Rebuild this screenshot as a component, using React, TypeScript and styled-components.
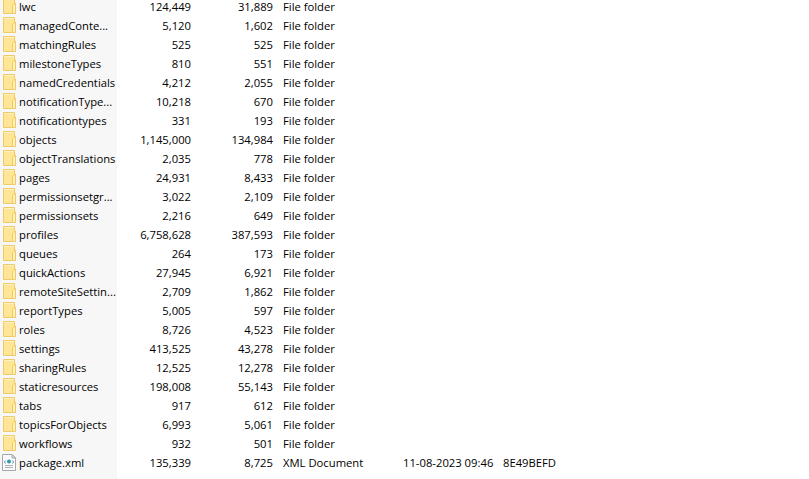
import React from 'react';
import styled, { createGlobalStyle } from 'styled-components';

const GlobalStyle = createGlobalStyle`
  html, body {
    margin: 0;
    height: 100%;
    overflow: hidden;
    background: #fff;
  }
`;

const Page = styled.div`
  height: 479px;
  overflow: hidden;
  background: linear-gradient(to right, #f7f7f7 117px, #fff 117px);
  color: #000;
  font-family: 'Open Sans', 'Noto Sans', sans-serif;
  font-size: 11.25px;
`;

const List = styled.div`
  margin-top: -3px;
`;

const Row = styled.div`
  display: grid;
  grid-template-columns: 19px 98px 74px 82px 10px 120px 100px 1fr;
  align-items: center;
  height: 19px;
  white-space: nowrap;
`;

const IconCell = styled.div`
  display: flex;
  align-items: flex-start;
  height: 19px;
  padding: 1px 0 0 2px;
  box-sizing: border-box;
`;

const Name = styled.div`
  overflow: hidden;
  white-space: nowrap;
`;

const Num = styled.div`
  text-align: right;
`;

const Text = styled.div<{ $col?: number }>`
  ${p => (p.$col ? `grid-column: ${p.$col};` : '')}
`;

const FolderIcon = () => (
  <svg width="14" height="16" viewBox="0 0 14 16">
    <path d="M1.5 .5h11v15h-11z" fill="#ffe596" stroke="#eecb66" />
    <path d="M10.5 15.5v-8l3-2.5v10.5z" fill="#fff0bd" stroke="#eecb66" />
    <path d="M2 1h10v1H2z" fill="#fff1c4" />
  </svg>
);

const XmlIcon = () => (
  <svg width="14" height="17" viewBox="0 0 14 17">
    <path d="M.5 .5h9.5l3.5 3.5v12.5H.5z" fill="#fbfbfb" stroke="#a4a8ad" />
    <path d="M10 .5v3.5h3.5z" fill="#dfe3e6" stroke="#a4a8ad" />
    <path d="M4 6.5L2 8l2 1.5M10 6.5L12 8l-2 1.5" fill="none" stroke="#8aa4bb" />
    <circle cx="7" cy="7.5" r="2" fill="#2b9db0" />
    <path d="M3 11.5h8M3 13.5h8" stroke="#a9b0b6" />
  </svg>
);

type Entry = { name: string; size: string; packed: string };

const folders: Entry[] = [
  { name: 'lwc', size: '124,449', packed: '31,889' },
  { name: 'managedConte...', size: '5,120', packed: '1,602' },
  { name: 'matchingRules', size: '525', packed: '525' },
  { name: 'milestoneTypes', size: '810', packed: '551' },
  { name: 'namedCredentials', size: '4,212', packed: '2,055' },
  { name: 'notificationType...', size: '10,218', packed: '670' },
  { name: 'notificationtypes', size: '331', packed: '193' },
  { name: 'objects', size: '1,145,000', packed: '134,984' },
  { name: 'objectTranslations', size: '2,035', packed: '778' },
  { name: 'pages', size: '24,931', packed: '8,433' },
  { name: 'permissionsetgr...', size: '3,022', packed: '2,109' },
  { name: 'permissionsets', size: '2,216', packed: '649' },
  { name: 'profiles', size: '6,758,628', packed: '387,593' },
  { name: 'queues', size: '264', packed: '173' },
  { name: 'quickActions', size: '27,945', packed: '6,921' },
  { name: 'remoteSiteSettin...', size: '2,709', packed: '1,862' },
  { name: 'reportTypes', size: '5,005', packed: '597' },
  { name: 'roles', size: '8,726', packed: '4,523' },
  { name: 'settings', size: '413,525', packed: '43,278' },
  { name: 'sharingRules', size: '12,525', packed: '12,278' },
  { name: 'staticresources', size: '198,008', packed: '55,143' },
  { name: 'tabs', size: '917', packed: '612' },
  { name: 'topicsForObjects', size: '6,993', packed: '5,061' },
  { name: 'workflows', size: '932', packed: '501' },
];

const App = () => (
  <Page>
    <GlobalStyle />
    <List>
      {folders.map(f => (
        <Row key={f.name}>
          <IconCell><FolderIcon /></IconCell>
          <Name>{f.name}</Name>
          <Num>{f.size}</Num>
          <Num>{f.packed}</Num>
          <Text $col={6}>File folder</Text>
        </Row>
      ))}
      <Row>
        <IconCell><XmlIcon /></IconCell>
        <Name>package.xml</Name>
        <Num>135,339</Num>
        <Num>8,725</Num>
        <Text $col={6}>XML Document</Text>
        <Text>11-08-2023 09:46</Text>
        <Text>8E49BEFD</Text>
      </Row>
    </List>
  </Page>
);

export default App;
